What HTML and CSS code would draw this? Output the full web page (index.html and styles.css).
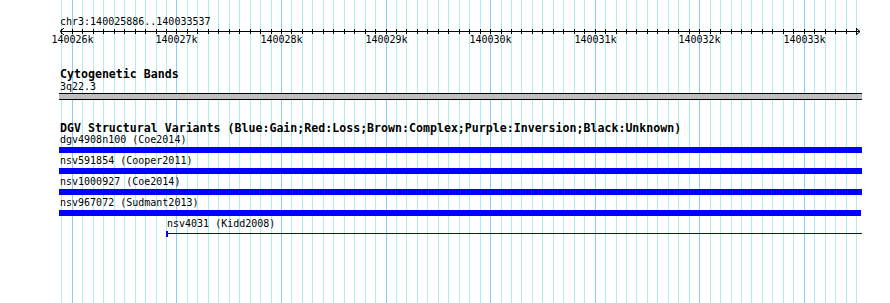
FILE: index.html
```html
<!DOCTYPE html>
<html lang="en">
<head>
    <meta charset="UTF-8">
    <title>chr3:140025886..140033537</title>
    <link rel="stylesheet" href="styles.css">
</head>
<body>
    <div class="panel">
        <svg class="grid" id="grid" width="890" height="303"></svg>
        <div class="tracks">
            <div class="chrom">chr3:140025886..140033537</div>
            <svg class="ruler" id="ruler" width="890" height="20"></svg>

            <div class="track-title cyto-title">Cytogenetic Bands</div>
            <div class="band-label">3q22.3</div>
            <div class="band"></div>

            <div class="track-title dgv-title">DGV Structural Variants (Blue:Gain;Red:Loss;Brown:Complex;Purple:Inversion;Black:Unknown)</div>
            <div class="feature">
                <div class="feature-label">dgv4908n100 (Coe2014)</div>
                <div class="feature-bar"></div>
            </div>
            <div class="feature">
                <div class="feature-label">nsv591854 (Cooper2011)</div>
                <div class="feature-bar"></div>
            </div>
            <div class="feature">
                <div class="feature-label">nsv1000927 (Coe2014)</div>
                <div class="feature-bar"></div>
            </div>
            <div class="feature">
                <div class="feature-label">nsv967072 (Sudmant2013)</div>
                <div class="feature-bar" style="width:802px"></div>
            </div>
            <div class="feature" style="margin-left:107px">
                <div class="feature-label">nsv4031 (Kidd2008)</div>
                <div class="feature-line">
                    <div class="stub"></div>
                    <div class="connector"></div>
                </div>
            </div>
        </div>
    </div>

    <script>
        // region shown and where it sits in the picture
        const START = 140025886;
        const END = 140033537;
        const LEFT = 60;
        const WIDTH = 800;
        const NS = 'http://www.w3.org/2000/svg';

        function toX(pos) {
            return Math.round(LEFT + (pos - START) * WIDTH / (END - START + 1));
        }

        function line(svg, x1, y1, x2, y2, cls) {
            const el = document.createElementNS(NS, 'line');
            el.setAttribute('x1', x1);
            el.setAttribute('y1', y1);
            el.setAttribute('x2', x2);
            el.setAttribute('y2', y2);
            el.setAttribute('class', cls);
            svg.appendChild(el);
        }

        const grid = document.getElementById('grid');
        const ruler = document.getElementById('ruler');

        // grid lines and ruler ticks every 100 bp, labels every kb
        const first = Math.ceil(START / 100) * 100;
        for (let pos = first; pos <= END; pos += 100) {
            const x = toX(pos) + 0.5;
            const major = pos % 1000 === 0;
            line(grid, x, 0, x, 303, major ? 'grid-major' : 'grid-minor');
            line(ruler, x, 2, x, 7, 'tick');
            if (major) {
                const label = document.createElementNS(NS, 'text');
                label.setAttribute('x', x);
                label.setAttribute('y', 16);
                label.setAttribute('class', 'tick-label');
                label.textContent = (pos / 1000) + 'k';
                ruler.appendChild(label);
            }
        }

        // axis with arrow heads at both ends
        line(ruler, LEFT, 4.5, LEFT + WIDTH, 4.5, 'axis');
        line(ruler, LEFT, 4.5, LEFT + 4, 1, 'axis');
        line(ruler, LEFT, 4.5, LEFT + 4, 8, 'axis');
        line(ruler, LEFT + WIDTH, 4.5, LEFT + WIDTH - 4, 1, 'axis');
        line(ruler, LEFT + WIDTH, 4.5, LEFT + WIDTH - 4, 8, 'axis');
    </script>
</body>
</html>
```

FILE: styles.css
```css
body {
    margin: 0;
    background: #ffffff;
    color: #000000;
    font-family: "DejaVu Sans Mono", "Liberation Mono", monospace;
}
.panel {
    position: relative;
    width: 890px;
    height: 303px;
    overflow: hidden;
}
.grid {
    position: absolute;
    top: 0;
    left: 0;
}
.grid line {
    stroke-width: 1;
    shape-rendering: crispEdges;
}
.grid-minor {
    stroke: #afeeee;
}
.grid-major {
    stroke: #87cefa;
}
.tracks {
    position: relative;
    padding: 16px 0 0 59px;
}
.chrom {
    font-size: 10px;
    line-height: 11px;
    padding-left: 1px;
}
.ruler {
    display: block;
    margin-left: -59px;
}
.ruler .tick,
.ruler .axis {
    stroke: #000000;
    stroke-width: 1;
}
.ruler .tick {
    shape-rendering: crispEdges;
}
.tick-label {
    font-family: "DejaVu Sans Mono", monospace;
    font-size: 10px;
    text-anchor: middle;
    fill: #000000;
}
.track-title {
    font-size: 11.6px;
    font-weight: bold;
    line-height: 12px;
    padding-left: 1px;
    white-space: nowrap;
}
.cyto-title {
    margin-top: 21px;
}
.band-label {
    font-size: 10px;
    line-height: 11px;
    margin-top: 1px;
    padding-left: 1px;
}
.band {
    width: 803px;
    height: 5px;
    margin-top: 1px;
    background: #bebebe;
    border-top: 1px solid #000000;
    border-bottom: 1px solid #000000;
}
.dgv-title {
    margin-top: 22px;
}
.feature {
    height: 21px;
}
.feature-label {
    font-size: 10px;
    line-height: 12px;
    height: 12px;
    padding-left: 1px;
    white-space: nowrap;
}
.feature-bar {
    width: 803px;
    height: 6px;
    margin-top: 1px;
    background: #0000ff;
}
.feature-line {
    display: flex;
    width: 696px;
    height: 6px;
    margin-top: 1px;
}
.stub {
    width: 2px;
    background: #0000ff;
}
.connector {
    flex: 1;
    height: 1px;
    margin-top: 2px;
    background: #0000c0;
}
```
